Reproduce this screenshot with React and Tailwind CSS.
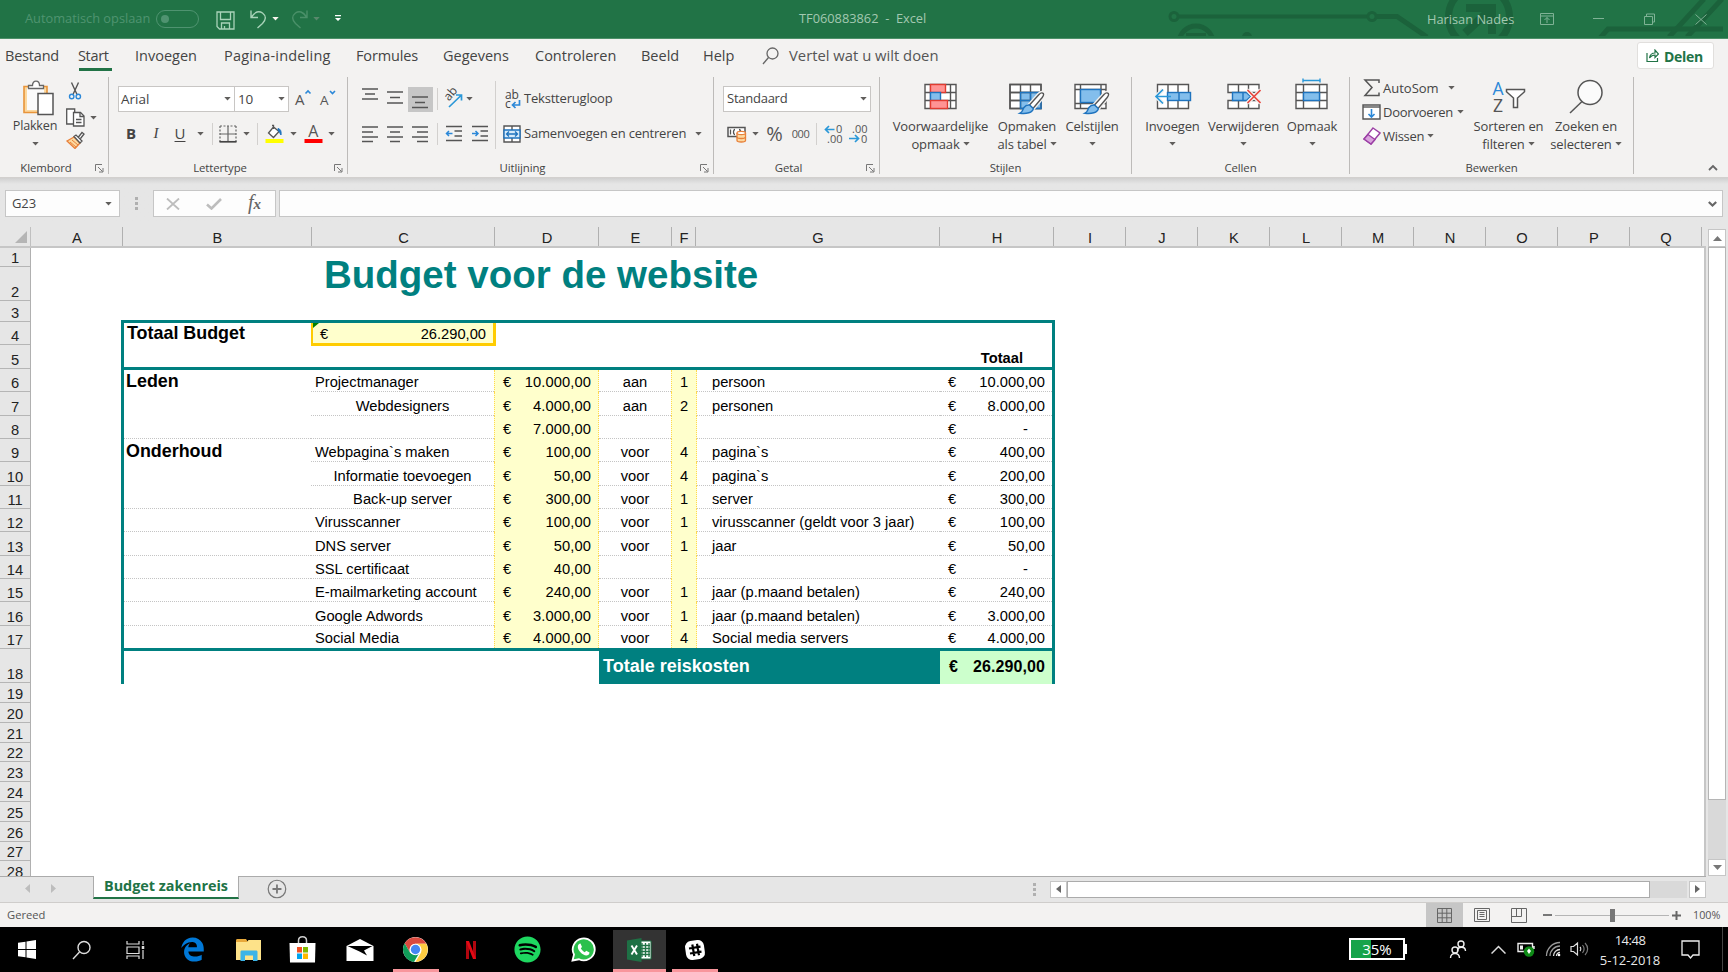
import { FaEdgeLegacy, FaSpotify } from 'react-icons/fa6';

/* ---------- shared pieces ---------- */

function Caret({ className = '' }) {
  return (
    <svg className={`h-[4px] w-[7px] shrink-0 ${className}`} viewBox="0 0 7 4" fill="#605e5c">
      <path d="M0.3 0h6.4L3.5 3.6z" />
    </svg>
  );
}

function Launcher() {
  return (
    <svg className="h-[9px] w-[9px]" viewBox="0 0 9 9" fill="none" stroke="#777">
      <path d="M0.5 7V0.5H7M3 3l4.5 4.5M8 4v4H4" />
    </svg>
  );
}

function Group({ width, label, launcher, children }) {
  return (
    <div className={`${width} flex h-[97px] shrink-0 flex-col border-r border-[#bdbbb9]`}>
      <div className="h-[86px]">{children}</div>
      <div className="flex h-[13px] items-center text-[11.4px] leading-[13px] tracking-[-0.1px]">
        <span className={launcher ? 'w-[0px]' : 'w-[13px]'} />
        <span className="flex-1 pl-[-1px] text-center">{label}</span>
        <span className={launcher ? 'w-[16px] pt-[1px] pl-[3px]' : 'w-[13px]'}>{launcher && <Launcher />}</span>
      </div>
    </div>
  );
}

function Cell({ w, className = '', children }) {
  return <div className={`flex h-full shrink-0 items-center justify-center ${w} ${className}`}>{children}</div>;
}

function Divider({ className = '' }) {
  return <div className={`w-px shrink-0 bg-[#d2d0ce] ${className}`} />;
}

function Lines({ rows }) {
  return (
    <svg className="h-[18px] w-[17px]" viewBox="0 0 17 18" stroke="#555" strokeWidth="1.5">
      {rows.map(([x1, x2, y]) => (
        <path key={y} d={`M${x1} ${y}H${x2}`} />
      ))}
    </svg>
  );
}

function BigButton({ w, icon, lines, caretBelow }) {
  return (
    <div className={`${w} flex shrink-0 flex-col items-center text-[13px] leading-[18px] tracking-[-0.15px]`}>
      <div className="flex h-[39px] items-start">{icon}</div>
      <span className="whitespace-nowrap">{lines[0]}</span>
      {caretBelow ? (
        <Caret className="mt-[7px]" />
      ) : (
        <span className="flex items-center gap-[3px] whitespace-nowrap">
          {lines[1]}
          <Caret />
        </span>
      )}
    </div>
  );
}

/* ---------- ribbon icons ---------- */

const GRID = 'M1 6.5h31v24H1zM1 14.5h31M1 22.5h31';

function ConditionalIcon() {
  return (
    <svg className="h-[39px] w-[34px]" viewBox="0 0 34 39" fill="none" strokeWidth="1.4">
      <path d={GRID + 'M6.5 6.5v24M26.5 6.5v24'} fill="#fff" stroke="#555" />
      <rect x="6.5" y="6.5" width="15" height="8" fill="#ff9494" stroke="#e03c31" />
      <rect x="6.5" y="14.5" width="10" height="8" fill="#83beec" stroke="#1e73be" />
      <rect x="6.5" y="22.5" width="17" height="8" fill="#ff9494" stroke="#e03c31" />
    </svg>
  );
}

function Brush() {
  return (
    <g transform="translate(0 -1)">
      <path d="M33.5 16c1.500.5 1.500 2-.3 4.500L24 31.500l-3.500-3.500L30 17.500c1.500-1.500 2.500-2 3.500-1.500z" fill="none" stroke="#f3f2f1" strokeWidth="4" />
      <path d="M33.500 16c1.500.5 1.500 2-.3 4.500L24 31.500l-3.500-3.500L30 17.500c1.500-1.500 2.500-2 3.500-1.500z" fill="#fff" stroke="#555" />
      <path d="M20.500 28l3.800 3.600c-.5 4-7 5.600-13.300 4.600 3-1.200 2.200-3.200 4-5.700 1.400-2 3.500-2.800 5.500-2.500z" fill="#83beec" stroke="#1e73be" />
    </g>
  );
}

function TableIcon() {
  return (
    <svg className="h-[39px] w-[36px]" viewBox="0 0 36 39" fill="none" strokeWidth="1.4">
      <path d={GRID} fill="#fff" stroke="#555" />
      <path d="M11.500 14.500H32v16H11.500z" fill="#83beec" />
      <path d={GRID + 'M11.500 6.500v24M21.500 6.500v24'} stroke="#555" />
      <path d="M11.500 30.500v-16H32v16zM11.500 22.500H32M21.500 14.500v16" stroke="#1e73be" />
      <Brush />
    </svg>
  );
}

function StylesIcon() {
  return (
    <svg className="h-[39px] w-[36px]" viewBox="0 0 36 39" fill="none" strokeWidth="1.4">
      <path d="M1 6.500h31v24H1zM1 11.500h31M1 25.500h31M6.500 6.500v24M27 6.500v24" fill="#fff" stroke="#555" />
      <rect x="6.500" y="11.500" width="20" height="13" fill="#83beec" stroke="#1e73be" />
      <Brush />
    </svg>
  );
}

function InsertIcon() {
  return (
    <svg className="h-[39px] w-[38px]" viewBox="0 1 38 39" fill="none" strokeWidth="1.4">
      <path d="M3.500 7.500h31v24h-31zM14 7.500v24M24 7.500v24" fill="#fff" stroke="#555" />
      <rect x="13.500" y="15.500" width="23" height="8" fill="#83beec" stroke="#1e73be" />
      <path d="M25 15.500v8" stroke="#1e73be" />
      <path d="M9 12.500l-7 7 7 7" stroke="#f3f2f1" strokeWidth="4" />
      <path d="M17 19.500H2M9 12.500l-7 7 7 7" stroke="#2b98d8" strokeWidth="1.700" />
    </svg>
  );
}

function DeleteIcon() {
  return (
    <svg className="h-[39px] w-[34px]" viewBox="0 1 34 39" fill="none" strokeWidth="1.400">
      <path d="M1 15.500v-8h31v8zM11.500 7.500v8M21.500 7.500v8M1 23.500v8h31v-8zM11.500 23.500v8M21.500 23.500v8" fill="#fff" stroke="#555" />
      <path d="M5.500 15.500h14l4 4-4 4h-14zM16 15.500v8" fill="#83beec" stroke="#1e73be" />
      <path d="M20.500 13l13 13M33.500 13l-13 13" stroke="#f3f2f1" strokeWidth="4" />
      <path d="M20.500 13l13 13M33.500 13l-13 13" stroke="#e8483f" strokeWidth="1.600" />
    </svg>
  );
}

function FormatIcon() {
  return (
    <svg className="h-[39px] w-[34px]" viewBox="0 0 34 39" fill="none" strokeWidth="1.400">
      <path d={GRID + 'M8.500 6.500v24M24.500 6.500v24'} fill="#fff" stroke="#555" />
      <rect x="8.500" y="14.500" width="16" height="8" fill="#83beec" stroke="#1e73be" />
      <path d="M8 2.500h17M8 .5v4M25 .5v4" stroke="#2b98d8" />
    </svg>
  );
}

function PasteIcon() {
  return (
    <svg className="h-[37px] w-[32px]" viewBox="0 0 32 37" fill="none" strokeWidth="1.300">
      <path d="M2 6.500h23v26H2z" fill="#fcd9a0" stroke="#e8943a" strokeWidth="1.600" />
      <path d="M5 8h17v22H5z" fill="#fbfbfb" />
      <path d="M6.500 8.500v-3h4C10.500 2.500 12 1.200 14 1.200s3.500 1.300 3.500 4.300h4v3z" fill="#fff" stroke="#666" />
      <path d="M16 13.500h15v21H16z" fill="#fff" stroke="#555" strokeWidth="1.500" />
    </svg>
  );
}

function CutIcon() {
  return (
    <svg className="h-[18px] w-[14px]" viewBox="0 0 14 18" fill="none">
      <path d="M3.500 .5l5.500 12M10.500 .5L5 12.500" stroke="#555" strokeWidth="1.400" />
      <circle cx="3.700" cy="14.500" r="2.200" stroke="#2b88d8" strokeWidth="1.400" />
      <circle cx="10.300" cy="14.500" r="2.200" stroke="#2b88d8" strokeWidth="1.400" />
    </svg>
  );
}

function CopyIcon() {
  return (
    <svg className="h-[19px] w-[19px]" viewBox="0 0 19 19" fill="#fff" stroke="#555" strokeWidth="1.300">
      <path d="M.700 1h8v15h-8z" />
      <path d="M7.500 4.500h7l3.500 3.500v10H7.500z" />
      <path d="M14 4.500V8.500h4M10 11.500h5.500M10 14.500h5.500" fill="none" />
    </svg>
  );
}

function PainterIcon() {
  return (
    <svg className="h-[18px] w-[19px]" viewBox="0 0 19 18" fill="none">
      <path d="M1 10l7-4 6 6-5 5.500z" fill="#fcd9a0" stroke="#e8803a" strokeWidth="1.300" />
      <path d="M4 11l6 5M6 9l6 5" stroke="#e8803a" />
      <path d="M8 5.500l2-1.500 6 6-2 2zM12.500 6l3.500-4.500 2 1.500-3.500 4.500" fill="#fff" stroke="#555" strokeWidth="1.300" />
    </svg>
  );
}

function BordersIcon() {
  return (
    <svg className="h-[18px] w-[18px]" viewBox="0 0 18 18" fill="none" stroke="#666" strokeWidth="1.200">
      <path d="M1 1h16M1 1v16M17 1v16" strokeDasharray="2 1.500" />
      <path d="M9 1v16M1 9h16" />
      <path d="M.5 16.800h17" stroke="#444" strokeWidth="1.700" />
    </svg>
  );
}

function FillIcon() {
  return (
    <svg className="h-[20px] w-[19px]" viewBox="0 0 19 20" fill="none">
      <path d="M8.500 3L3.500 9l5 4.500 5.500-6zM8.500 5V1.500h-1.500" fill="#fff" stroke="#555" strokeWidth="1.300" />
      <path d="M13 4.500c2.500.5 3.500 2.500 3 6.500-1.500-2-1-3-3-4.500z" fill="#1e73be" stroke="#1e73be" />
      <path d="M.5 15h18v4H.5z" fill="#ff0" />
    </svg>
  );
}

function OrientationIcon() {
  return (
    <svg className="h-[20px] w-[20px] overflow-visible" viewBox="0 0 20 20" fill="none">
      <text x="0" y="0" transform="translate(6 13.500) rotate(-50)" fontSize="12" fill="#444">ab</text>
      <path d="M6 19L18 7.500M13 7h5.500V12.500" stroke="#2b98d8" strokeWidth="1.700" />
    </svg>
  );
}

function WrapIcon() {
  return (
    <svg className="h-[20px] w-[17px] overflow-visible" viewBox="0 0 17 20" fill="none">
      <text x="0" y="9.500" fontSize="12" fill="#444">ab</text>
      <text x="0" y="18.500" fontSize="12" fill="#444">c</text>
      <path d="M14.500 11v5H8M10.500 13l-3 3 3 3" stroke="#2b88d8" strokeWidth="1.700" />
    </svg>
  );
}

function MergeIcon() {
  return (
    <svg className="h-[18px] w-[18px]" viewBox="0 0 18 18" fill="none">
      <path d="M1 1h16v16H1zM9 1v4M9 13v4" fill="#fff" stroke="#555" strokeWidth="1.400" />
      <path d="M1 5h16v8H1z" fill="#d6ebfa" stroke="#1e73be" strokeWidth="1.400" />
      <path d="M3.500 9h11M6 6.500L3.500 9 6 11.500M12 6.500L14.500 9 12 11.500" stroke="#1e73be" strokeWidth="1.300" />
    </svg>
  );
}

function IndentIcon({ right }) {
  return (
    <svg className="h-[18px] w-[18px]" viewBox="0 0 18 18" fill="none" strokeWidth="1.500">
      <path d="M1 1.500h16M9.500 6h7.500M9.500 11h7.500M1 15.500h16" stroke="#555" />
      <path d={right ? 'M1 8.500h6M4.500 6L7 8.500 4.500 11' : 'M7.500 8.500h-6M4 6L1.500 8.500 4 11'} stroke="#2b88d8" />
    </svg>
  );
}

function MoneyIcon() {
  return (
    <svg className="h-[17px] w-[20px]" viewBox="0 0 20 17" fill="none">
      <path d="M1 1.500h17v9H1z" fill="#fff" stroke="#555" strokeWidth="1.500" />
      <path d="M3.500 3.500v5M8 3.500c-2 0-2 5 0 5M12 3.500c2 0 2 5 0 5" stroke="#555" strokeWidth="1.300" />
      <path d="M10 7v7.500c0 2 8.500 2 8.500 0V7" fill="#fcd9a0" stroke="#e8803a" strokeWidth="1.300" />
      <ellipse cx="14.250" cy="7" rx="4.250" ry="1.600" fill="#fff" stroke="#e8803a" strokeWidth="1.300" />
      <path d="M10 11c0 2 8.500 2 8.500 0" stroke="#e8803a" strokeWidth="1.300" />
    </svg>
  );
}

function DecimalIcon({ more }) {
  return (
    <svg className="h-[20px] w-[19px] overflow-visible" viewBox="0 0 19 20" fill="none">
      {more ? (
        <>
          <text x="12" y="9" fontSize="11" fill="#555">0</text>
          <text x="3" y="18.500" fontSize="11" fill="#555">.00</text>
          <path d="M10.500 5.500H1.500M5 2L1.500 5.500 5 9" stroke="#2b98d8" strokeWidth="1.700" />
        </>
      ) : (
        <>
          <text x="3" y="9" fontSize="11" fill="#555">.00</text>
          <text x="12" y="18.500" fontSize="11" fill="#555">0</text>
          <path d="M0 14.500h9M6 11l3.500 3.500L6 18" stroke="#2b98d8" strokeWidth="1.700" />
        </>
      )}
    </svg>
  );
}

function SortIcon() {
  return (
    <svg className="h-[34px] w-[34px] overflow-visible" viewBox="0 0 34 34" fill="none">
      <text x="0.500" y="15" fontSize="17.500" fill="#2b88d8">A</text>
      <text x="1" y="31.500" fontSize="17.500" fill="#555">Z</text>
      <path d="M14.500 9.500h18v2.200l-7 6.300v9.500h-4V18l-7-6.300z" fill="#fff" stroke="#555" strokeWidth="1.500" />
    </svg>
  );
}

/* ---------- window title ---------- */

function TitleBar() {
  return (
    <div className="relative flex h-[39px] shrink-0 items-center border-b border-[#4d9069] bg-[#217346] text-[12.800px] text-[#a3c8b1]">
      <svg className="absolute top-0 right-0 h-[36px] w-[576px]" viewBox="0 0 576 36" fill="none" stroke="#1b623b" strokeWidth="4">
        <circle cx="22" cy="16.500" r="4" strokeWidth="3" />
        <path d="M27 16.500h188" />
        <circle cx="220" cy="16.500" r="4" strokeWidth="3" />
        <path d="M225 16.500h20L275 37" strokeWidth="5" />
        <circle cx="44" cy="43" r="17" strokeWidth="5" />
        <path d="M34 35h20" />
        <circle cx="95" cy="37" r="5" fill="#1b623b" stroke="none" />
        <circle cx="327" cy="17" r="30.500" strokeWidth="7" />
        <path d="M314 8h26v26M337 11L313 33" strokeWidth="8" />
        <path d="M448 38l8-9h115" strokeWidth="5" />
        <path d="M517 37l35-38M535 37l35-38" strokeWidth="5" />
      </svg>
      <div className="relative flex w-[799px] items-center text-[#4f9370]">
        <span className="ml-[25px] w-[131px] whitespace-nowrap">Automatisch opslaan</span>
        <span className="flex h-[18px] w-[43px] items-center rounded-full border border-[#4f9370] pl-[4px]">
          <span className="h-[8px] w-[8px] rounded-full bg-[#4f9370]" />
        </span>
        <svg className="mt-[2px] ml-[17px] h-[19px] w-[19px]" viewBox="0 0 19 19" fill="none" stroke="#a9d3b9" strokeWidth="1.300">
          <path d="M1 1h17v17H3.500L1 15.500zM4.500 1v7.500h10V1M5.500 18v-6h8v6M8.500 18v-3" />
        </svg>
        <svg className="ml-[15px] h-[20px] w-[17px]" viewBox="0 0 17 20" fill="none" stroke="#a9d3b9" strokeWidth="1.400">
          <path d="M1 1.500v7h7M1.500 8C5 2.500 9 1.500 12.500 4c4 3 3.500 7 0 10.500L7.500 19" />
        </svg>
        <Caret className="ml-[5px] brightness-[2.600]" />
        <svg className="ml-[12px] h-[20px] w-[17px] opacity-30" viewBox="0 0 17 20" fill="none" stroke="#a9d3b9" strokeWidth="1.400">
          <path d="M16 1.500v7H9M15.500 8C12 2.500 8 1.500 4.500 4c-4 3-3.500 7 0 10.500L9.500 19" />
        </svg>
        <Caret className="ml-[5px] opacity-40 brightness-[1.800]" />
        <svg className="mb-[2px] ml-[14px] h-[6px] w-[8px]" viewBox="0 0 8 6" fill="#fff">
          <path d="M1 0h6v1.200H1zM1 3h6L4 6z" />
        </svg>
      </div>
      <span className="relative mt-[-1px] w-[628px] whitespace-pre">TF060883862  -  Excel</span>
      <span className="relative mt-[1px] w-[112px]">Harisan Nades</span>
      <div className="relative flex flex-1 items-center text-[#7fb295]">
        <svg className="ml-[1px] h-[12px] w-[14px]" viewBox="0 0 14 12" fill="none" stroke="currentColor">
          <path d="M.5.500h13v11H.5zM.5 3h13M7 10V4.500M4.500 7L7 4.500 9.500 7" />
        </svg>
        <svg className="ml-[39px] h-[12px] w-[11px]" viewBox="0 0 11 12" stroke="currentColor">
          <path d="M0 5.500h11" />
        </svg>
        <svg className="ml-[40px] h-[12px] w-[11px]" viewBox="0 0 11 12" fill="none" stroke="currentColor">
          <path d="M.5 3.500h8v8h-8zM2.500 3.500V1h8v8H8.500" />
        </svg>
        <svg className="ml-[40px] h-[11px] w-[12px]" viewBox="0 0 12 11" stroke="currentColor">
          <path d="M.5.500l11 10M11.500.500l-11 10" />
        </svg>
      </div>
    </div>
  );
}

function Tabs() {
  const tabs = [
    ['Bestand', 'w-[73px] tracking-[-0.2px]'],
    ['Start', 'w-[57px] tracking-[-0.35px]'],
    ['Invoegen', 'w-[89px]'],
    ['Pagina-indeling', 'w-[132px] tracking-[0.2px]'],
    ['Formules', 'w-[87px] tracking-[-0.15px]'],
    ['Gegevens', 'w-[92px]'],
    ['Controleren', 'w-[106px]'],
    ['Beeld', 'w-[62px]'],
    ['Help', 'w-[58px]'],
  ];
  return (
    <div className="flex h-[34px] shrink-0 items-center pl-[5px] text-[14.500px]">
      {tabs.map(([name, cls]) => (
        <div key={name} className={`${cls} flex h-full shrink-0 flex-col whitespace-nowrap`}>
          <span className="h-[29px] leading-[33px]">{name}</span>
          {name === 'Start' && <span className="ml-[1px] h-[3px] w-[33px] bg-[#217346]" />}
        </div>
      ))}
      <svg className="ml-[1px] h-[18px] w-[17px]" viewBox="0 0 17 18" fill="none" stroke="#666" strokeWidth="1.300">
        <circle cx="10.500" cy="6.500" r="5.500" />
        <path d="M6.500 10.500L1 17" />
      </svg>
      <span className="mt-[-1px] ml-[10px] text-[14.800px] text-[#555]">Vertel wat u wilt doen</span>
      <button className="mr-[14px] ml-auto mt-[-1px] flex h-[27px] w-[77px] items-center rounded-[3px] border border-[#e1dfdd] bg-white pl-[8px] font-bold text-[#217346]">
        <svg className="h-[13px] w-[13px]" viewBox="0 0 13 13" fill="none" stroke="#217346" strokeWidth="1.200">
          <path d="M1 4v8.500h10.500V9M3.500 9C4 5.500 6 4 9 4V1l3.500 4L9 8.500V6C6.500 6 5 7 3.500 9z" />
        </svg>
        <span className="mt-[1px] ml-[5px] text-[14px] tracking-[-0.300px]">Delen</span>
      </button>
    </div>
  );
}

/* ---------- ribbon ---------- */

function ClipboardGroup() {
  return (
    <Group width="w-[109px]" label="Klembord" launcher>
      <div className="flex pl-[5px]">
        <div className="flex w-[60px] flex-col items-center pt-[3px] text-[12.600px] leading-[18px] tracking-[-0.200px]">
          <div className="ml-[5px]"><PasteIcon /></div>
          <span>Plakken</span>
          <Caret className="mt-[7px]" />
        </div>
        <div className="flex flex-col pt-[5px]">
          <div className="flex h-[23px] items-start pl-[3px]"><CutIcon /></div>
          <div className="flex h-[25px] items-center gap-[5px] pl-[1px]"><CopyIcon /><Caret /></div>
          <div className="flex h-[20px] items-start pt-[1px] pl-[1px]"><PainterIcon /></div>
        </div>
      </div>
    </Group>
  );
}

function FontGroup() {
  return (
    <Group width="w-[239px]" label="Lettertype" launcher>
      <div className="flex h-[44px] items-center pl-[9px] text-[13.500px]">
        <div className="flex h-[26px] w-[117px] items-center justify-between border border-[#c8c6c4] bg-white pr-[3px] pl-[2px]">Arial<Caret /></div>
        <div className="ml-[-1px] flex h-[26px] w-[55px] items-center justify-between border border-[#c8c6c4] bg-white pr-[3px] pl-[3px] tracking-[-0.300px]">10<Caret /></div>
        <svg className="mb-[3px] ml-[6px] h-[18px] w-[17px] overflow-visible" viewBox="0 0 17 18" fill="none">
          <text x="0" y="15.500" fontSize="15" fill="#555">A</text>
          <path d="M10.500 4.500l2.500-2.500 2.500 2.500" stroke="#2b88d8" strokeWidth="1.600" />
        </svg>
        <svg className="mb-[3px] ml-[8px] h-[18px] w-[17px] overflow-visible" viewBox="0 0 17 18" fill="none">
          <text x="0" y="15.500" fontSize="13.500" fill="#555">A</text>
          <path d="M10 2l2.500 2.500L15 2" stroke="#2b88d8" strokeWidth="1.600" />
        </svg>
      </div>
      <div className="flex h-[26px] items-center pl-[9px] text-[15px]">
        <Cell w="w-[26px]" className="pb-[2px] font-bold">B</Cell>
        <Cell w="w-[24px]" className="pb-[2px] font-['Liberation_Serif'] italic">I</Cell>
        <Cell w="w-[24px]" className="pb-[2px] underline underline-offset-2">U</Cell>
        <Cell w="w-[16px]"><Caret /></Cell>
        <Divider className="ml-[4px] h-[22px]" />
        <Cell w="w-[29px]"><BordersIcon /></Cell>
        <Cell w="w-[9px]"><Caret /></Cell>
        <Divider className="ml-[6px] h-[22px]" />
        <Cell w="w-[33px]"><FillIcon /></Cell>
        <Cell w="w-[4px]"><Caret /></Cell>
        <Cell w="w-[37px]">
          <svg className="h-[20px] w-[19px] overflow-visible" viewBox="0 0 19 20">
            <text x="4.300" y="13" fontSize="16" fill="#555">A</text>
            <path d="M.5 15h18v4H.5z" fill="#f00" />
          </svg>
        </Cell>
        <Caret className="ml-[-4px]" />
      </div>
    </Group>
  );
}

function AlignmentGroup() {
  return (
    <Group width="w-[366px]" label="Uitlijning" launcher>
      <div className="flex pl-[9px]">
        <div className="w-[138px]">
          <div className="flex h-[44px] items-center">
            <Cell w="w-[26px]"><div className="mb-[6px]"><Lines rows={[[0, 16, 2], [3, 13, 7], [0, 16, 12]]} /></div></Cell>
            <Cell w="w-[25px]"><div className="mb-[2px]"><Lines rows={[[0, 16, 3], [3, 13, 8.500], [0, 16, 14]]} /></div></Cell>
            <div className="flex h-[25px] w-[25px] items-center justify-center bg-[#c6c6c6]">
              <div className="mt-[7px]"><Lines rows={[[0, 16, 3], [3, 13, 8.500], [0, 16, 13.500]]} /></div>
            </div>
            <Divider className="ml-[4px] h-[22px]" />
            <Cell w="w-[29px]" className="pb-[2px]"><OrientationIcon /></Cell>
            <Caret className="ml-[-1px]" />
          </div>
          <div className="flex h-[26px] items-center">
            <Cell w="w-[26px]"><Lines rows={[[0, 16, 2], [0, 11, 7], [0, 16, 12], [0, 11, 16.500]]} /></Cell>
            <Cell w="w-[25px]"><Lines rows={[[0, 16, 2], [3, 13, 7], [0, 16, 12], [3, 13, 16.500]]} /></Cell>
            <Cell w="w-[25px]"><Lines rows={[[0, 16, 2], [5, 16, 7], [0, 16, 12], [5, 16, 16.500]]} /></Cell>
            <Divider className="ml-[4px] h-[22px]" />
            <Cell w="w-[31px]"><IndentIcon /></Cell>
            <Cell w="w-[21px]"><IndentIcon right /></Cell>
          </div>
        </div>
        <Divider className="mt-[4px] h-[68px]" />
        <div className="text-[13px] tracking-[-0.200px]">
          <div className="flex h-[44px] items-center gap-[2px] pl-[9px]"><WrapIcon /><span>Tekstterugloop</span></div>
          <div className="flex h-[26px] items-center pl-[7px]">
            <MergeIcon />
            <span className="ml-[3px] whitespace-nowrap">Samenvoegen en centreren</span>
            <Caret className="ml-[9px]" />
          </div>
        </div>
      </div>
    </Group>
  );
}

function NumberGroup() {
  return (
    <Group width="w-[166px]" label="Getal" launcher>
      <div className="flex h-[44px] items-center pl-[9px]">
        <div className="flex h-[26px] w-[148px] items-center justify-between border border-[#c8c6c4] bg-white pr-[3px] pl-[3px] text-[13px] tracking-[-0.250px]">Standaard<Caret /></div>
      </div>
      <div className="flex h-[26px] items-center pl-[13px]">
        <MoneyIcon />
        <Cell w="w-[17px]"><Caret /></Cell>
        <Cell w="w-[21px]" className="text-[20px] text-[#555]">%</Cell>
        <Cell w="w-[31px]" className="text-[11px] tracking-[-0.500px] text-[#555]">000</Cell>
        <Divider className="h-[22px]" />
        <Cell w="w-[32px]"><DecimalIcon more /></Cell>
        <Cell w="w-[18px]"><DecimalIcon /></Cell>
      </div>
    </Group>
  );
}

function EditGroup() {
  return (
    <Group width="w-[284px]" label="Bewerken">
      <div className="flex">
        <div className="mt-[-1px] w-[117px] pl-[12px] text-[13px] leading-[24px]">
          <div className="flex h-[24px] items-center">
            <svg className="h-[18px] w-[19px]" viewBox="0 0 19 18" fill="none" stroke="#555" strokeWidth="1.500">
              <path d="M17 4V1H3l7 7.500L3 16.500h14v-3" />
            </svg>
            <span className="ml-[2px]">AutoSom</span>
            <Caret className="ml-[9px]" />
          </div>
          <div className="flex h-[24px] items-center">
            <svg className="h-[16px] w-[19px]" viewBox="0 0 19 16" fill="none">
              <path d="M1 1h17v14H1z" fill="#fff" stroke="#555" strokeWidth="1.400" />
              <path d="M1 3h17" stroke="#555" strokeWidth="1.400" />
              <path d="M9.500 5v8M6.500 10l3 3 3-3" stroke="#2b88d8" strokeWidth="1.600" />
            </svg>
            <span className="ml-[2px] tracking-[-0.250px]">Doorvoeren</span>
            <Caret className="ml-[4px]" />
          </div>
          <div className="flex h-[24px] items-center">
            <svg className="h-[18px] w-[19px]" viewBox="0 0 19 18" fill="none" stroke="#9b3fa5" strokeWidth="1.400">
              <path d="M11 1l7 5-9 11-7-5z" fill="#fff" />
              <path d="M6 7.500l7 5L9 17l-7-5z" fill="#d9a3dd" />
            </svg>
            <span className="ml-[2px] tracking-[-0.300px]">Wissen</span>
            <Caret className="ml-[3px]" />
          </div>
        </div>
        <div className="flex pt-[1px]">
          <BigButton w="w-[83px]" icon={<div className="pt-[2px]"><SortIcon /></div>} lines={['Sorteren en', 'filteren']} />
          <BigButton
            w="w-[72px]"
            icon={
              <svg className="mt-[1px] h-[35px] w-[34px]" viewBox="0 0 34 35" fill="none" stroke="#555" strokeWidth="1.500">
                <circle cx="21" cy="13.500" r="12" fill="#fbfbfb" />
                <path d="M13 22.500L1 34" />
              </svg>
            }
            lines={['Zoeken en', 'selecteren']}
          />
        </div>
      </div>
    </Group>
  );
}

function Ribbon() {
  return (
    <div className="flex h-[105px] shrink-0 border-b border-[#d2d0ce] pt-[4px]">
      <ClipboardGroup />
      <FontGroup />
      <AlignmentGroup />
      <NumberGroup />
      <Group width="w-[252px]" label="Stijlen">
        <div className="flex pt-px pl-[10px]">
          <BigButton w="w-[101px]" icon={<ConditionalIcon />} lines={['Voorwaardelijke', 'opmaak']} />
          <BigButton w="w-[72px]" icon={<TableIcon />} lines={['Opmaken', 'als tabel']} />
          <BigButton w="w-[58px]" icon={<StylesIcon />} lines={['Celstijlen']} caretBelow />
        </div>
      </Group>
      <Group width="w-[218px]" label="Cellen">
        <div className="flex pt-px pl-[6px]">
          <BigButton w="w-[69px]" icon={<InsertIcon />} lines={['Invoegen']} caretBelow />
          <BigButton w="w-[73px]" icon={<DeleteIcon />} lines={['Verwijderen']} caretBelow />
          <BigButton w="w-[64px]" icon={<FormatIcon />} lines={['Opmaak']} caretBelow />
        </div>
      </Group>
      <EditGroup />
      <div className="flex flex-1 items-end justify-end pr-[10px] pb-[6px]">
        <svg className="h-[7px] w-[10px]" viewBox="0 0 10 7" fill="none" stroke="#666" strokeWidth="1.800">
          <path d="M1 6l4-4 4 4" />
        </svg>
      </div>
    </div>
  );
}

function Dots({ className = '' }) {
  return (
    <div className={`flex flex-col gap-[2px] ${className}`}>
      <span className="h-[3px] w-[3px] bg-[#b0b0b0]" />
      <span className="h-[3px] w-[3px] bg-[#b0b0b0]" />
      <span className="h-[3px] w-[3px] bg-[#b0b0b0]" />
    </div>
  );
}

function FormulaBar() {
  return (
    <div className="flex h-[44px] shrink-0 items-start bg-linear-to-b from-[#d0d0d0] to-[#e6e6e6] to-[6px] pt-[12px] pl-[5px]">
      <div className="flex h-[27px] w-[115px] items-center justify-between border border-[#c6c6c6] bg-[#fdfdfd] pt-[1px] pr-[7px] pl-[6px] text-[13px] tracking-[-0.100px]">
        G23
        <Caret />
      </div>
      <Dots className="mt-[7px] ml-[15px]" />
      <div className="ml-[15px] flex h-[27px] w-[123px] items-center border border-[#c6c6c6] bg-[#fdfdfd]">
        <svg className="ml-[12px] h-[12px] w-[14px]" viewBox="0 0 14 12" stroke="#bdbdbd" strokeWidth="1.800">
          <path d="M1 .5l12 11M13 .5L1 11.500" />
        </svg>
        <svg className="ml-[26px] h-[12px] w-[16px]" viewBox="0 0 16 12" fill="none" stroke="#bdbdbd" strokeWidth="2.600">
          <path d="M1 6.500L5.500 10.500 15 1" />
        </svg>
        <span className="ml-[26px] pb-[2px] font-['Liberation_Serif'] text-[20px] leading-[20px] text-[#666] italic">
          f<span className="text-[15px] font-bold">x</span>
        </span>
      </div>
      <div className="ml-[3px] flex h-[27px] w-[1444px] items-center justify-end border border-[#c6c6c6] bg-[#fdfdfd] pr-[5px]">
        <svg className="h-[6px] w-[9px]" viewBox="0 0 9 6" fill="none" stroke="#666" strokeWidth="2.200">
          <path d="M.8 1l3.700 3.500L8.200 1" />
        </svg>
      </div>
    </div>
  );
}

/* ---------- worksheet ---------- */

const columns = [
  ['A', 'w-[92px]'], ['B', 'w-[189px]'], ['C', 'w-[183px]'], ['D', 'w-[104px]'], ['E', 'w-[73px]'], ['F', 'w-[24px]'],
  ['G', 'w-[244px]'], ['H', 'w-[114px]'], ['I', 'w-[72px]'], ['J', 'w-[72px]'], ['K', 'w-[72px]'], ['L', 'w-[72px]'],
  ['M', 'w-[72px]'], ['N', 'w-[72px]'], ['O', 'w-[72px]'], ['P', 'w-[72px]'], ['Q', 'w-[72px]'],
];

const rowHeights = [
  'h-[19px]', 'h-[34px]', 'h-[21px]', 'h-[23px]', 'h-[24px]', 'h-[23px]', 'h-[24px]', 'h-[23px]', 'h-[23px]', 'h-[24px]',
  'h-[23px]', 'h-[23px]', 'h-[24px]', 'h-[23px]', 'h-[23px]', 'h-[24px]', 'h-[23px]', 'h-[34px]', 'h-[20px]', 'h-[20px]',
  'h-[20px]', 'h-[19px]', 'h-[20px]', 'h-[20px]', 'h-[20px]', 'h-[20px]', 'h-[19px]', 'h-[20px]',
];

const items = [
  { h: 'h-[22px]', head: 'Leden', name: 'Projectmanager', price: '10.000,00', per: 'aan', n: '1', unit: 'persoon', total: '10.000,00' },
  { h: 'h-[24px]', name: 'Webdesigners', center: true, price: '4.000,00', per: 'aan', n: '2', unit: 'personen', total: '8.000,00' },
  { h: 'h-[23px]', name: '', price: '7.000,00', per: '', n: '', unit: '', total: '-', full: true },
  { h: 'h-[23px]', head: 'Onderhoud', name: 'Webpagina`s maken', price: '100,00', per: 'voor', n: '4', unit: 'pagina`s', total: '400,00' },
  { h: 'h-[24px]', name: 'Informatie toevoegen', center: true, price: '50,00', per: 'voor', n: '4', unit: 'pagina`s', total: '200,00' },
  { h: 'h-[23px]', name: 'Back-up server', center: true, price: '300,00', per: 'voor', n: '1', unit: 'server', total: '300,00', full: true },
  { h: 'h-[23px]', name: 'Virusscanner', price: '100,00', per: 'voor', n: '1', unit: 'virusscanner (geldt voor 3 jaar)', total: '100,00', full: true },
  { h: 'h-[24px]', name: 'DNS server', price: '50,00', per: 'voor', n: '1', unit: 'jaar', total: '50,00', full: true },
  { h: 'h-[23px]', name: 'SSL certificaat', price: '40,00', per: '', n: '', unit: '', total: '-', full: true },
  { h: 'h-[23px]', name: 'E-mailmarketing account', price: '240,00', per: 'voor', n: '1', unit: 'jaar (p.maand betalen)', total: '240,00', full: true },
  { h: 'h-[24px]', name: 'Google Adwords', price: '3.000,00', per: 'voor', n: '1', unit: 'jaar (p.maand betalen)', total: '3.000,00', full: true },
  { h: 'h-[22px]', name: 'Social Media', price: '4.000,00', per: 'voor', n: '4', unit: 'Social media servers', total: '4.000,00', last: true },
];

function ItemRow({ row }) {
  const line = row.last ? '' : 'border-b border-dotted border-b-[#c4c4c4]';
  const pad = row.last ? 'pb-[1px]' : '';
  const yellow = 'border-x border-dotted border-x-[#ffd94d] bg-[#ffffcc] pb-[1px]';
  return (
    <div className={`flex ${row.h} leading-[17px] whitespace-nowrap`}>
      <div className={`flex w-[187px] items-end pl-[2px] text-[17.900px] font-bold ${row.full ? line : 'pb-[1px]'}`}>
        <span className="mb-[2px] leading-[16px]">{row.head}</span>
      </div>
      <div className={`flex w-[183px] items-end ${pad} ${line} ${row.center ? 'justify-center' : 'pl-[4px]'}`}>{row.name}</div>
      <div className={`flex w-[105px] items-end justify-between pr-[7px] pl-[8px] tracking-[0.100px] ${yellow}`}>
        <span>€</span>
        <span>{row.price}</span>
      </div>
      <div className={`flex w-[72px] items-end justify-center ${pad} ${line}`}>{row.per}</div>
      <div className={`flex w-[26px] items-end justify-center ${yellow}`}>{row.n}</div>
      <div className={`flex w-[243px] items-end ${pad} ${line} pl-[15px]`}>{row.unit}</div>
      <div className={`flex w-[112px] items-end justify-between ${pad} ${line} pl-[8px] ${row.total === '-' ? 'pr-[24px]' : 'pr-[7px]'}`}>
        <span>€</span>
        <span className="tracking-[0.050px]">{row.total}</span>
      </div>
    </div>
  );
}

function BudgetTable() {
  return (
    <div className="ml-[90px] h-[364px] w-[934px] border-x-3 border-t-3 border-[#008080]">
      <div className="flex h-[44px] leading-[17px]">
        <div className="w-[187px] pt-[2px] pl-[3px] text-[17.900px] font-bold">Totaal Budget</div>
        <div className="relative flex h-[23px] w-[185px] items-end justify-between border-r-3 border-b-3 border-l-2 border-[#ffcc00] bg-[#ffffcc] pr-[7px] pl-[7px]">
          <svg className="absolute top-0 left-0 h-[5px] w-[6px]" viewBox="0 0 6 5" fill="#008000">
            <path d="M0 0h6L0 5z" />
          </svg>
          <span>€</span>
          <span>26.290,00</span>
        </div>
        <div className="flex w-[556px] items-end justify-end pr-[29px] font-bold">Totaal</div>
      </div>
      <div className="h-[3px] bg-[#008080]" />
      {items.map((row, i) => (
        <ItemRow key={i} row={row} />
      ))}
      <div className="h-[3px] bg-[#008080]" />
      <div className="flex h-[33px] font-bold">
        <div className="w-[475px]" />
        <div className="w-[341px] bg-[#008080] pl-[4px] text-[18px] leading-[30px] text-white">Totale reiskosten</div>
        <div className="flex w-[112px] justify-between bg-[#ccffcc] pr-[7px] pl-[9px] text-[16px] leading-[32px]">
          <span>€</span>
          <span className="tracking-[0.100px]">26.290,00</span>
        </div>
      </div>
    </div>
  );
}

function Worksheet() {
  return (
    <div className="flex h-[654px] shrink-0 bg-[#e6e6e6] font-['Liberation_Sans',Arial,sans-serif] text-[14.700px] text-black">
      <div className="w-[1706px]">
        <div className="flex h-[26px] border-b-2 border-[#c6c6c6] pt-[5px]">
          <div className="flex w-[31px] items-end justify-end border-r border-[#c0c0c0] pr-[3px] pb-[3px]">
            <svg className="h-[12px] w-[12px]" viewBox="0 0 12 12" fill="#b5b5b5"><path d="M12 0v12H0z" /></svg>
          </div>
          {columns.map(([name, w]) => (
            <div key={name} className={`${w} h-[19px] shrink-0 border-r border-[#b0b0b0] pl-[1px] text-center leading-[22px] text-[#222]`}>{name}</div>
          ))}
        </div>
        <div className="flex h-[628px] overflow-hidden">
          <div className="w-[31px] shrink-0 border-r border-[#b0b0b0] text-[#222]">
            {rowHeights.map((h, i) => (
              <div key={i} className={`${h} flex items-end justify-center border-b border-[#b5b5b5] leading-[16px]`}>
                <span>{i + 1}</span>
              </div>
            ))}
          </div>
          <div className="w-[1675px] border-r-2 border-[#c6c6c6] bg-white">
            <h1 className="h-[72px] pt-[5px] pl-[293px] text-[38.500px] leading-[44px] font-bold text-[#008080]">Budget voor de website</h1>
            <BudgetTable />
          </div>
        </div>
      </div>
      <div className="ml-[2px] w-[18px] pt-[7px]">
        <div className="flex h-[18px] items-center justify-center border border-[#c6c6c6] bg-white">
          <svg className="h-[5px] w-[9px]" viewBox="0 0 9 5" fill="#777"><path d="M4.500 0L9 5H0z" /></svg>
        </div>
        <div className="h-[553px] border border-[#b5b5b5] bg-white" />
        <div className="h-[59px] bg-[#d9d9d9]" />
        <div className="flex h-[17px] items-center justify-center border border-[#c6c6c6] bg-white">
          <svg className="h-[5px] w-[9px]" viewBox="0 0 9 5" fill="#777"><path d="M0 0h9L4.500 5z" /></svg>
        </div>
      </div>
    </div>
  );
}

function SheetTabs() {
  return (
    <div className="flex h-[26px] shrink-0 items-start bg-[#e6e6e6]">
      <div className="flex h-full w-[93px] items-center gap-[21px] border-t border-[#ababab] pb-[2px] pl-[25px]">
        <svg className="h-[9px] w-[5px]" viewBox="0 0 5 9" fill="#bdbdbd"><path d="M5 0v9L0 4.500z" /></svg>
        <svg className="h-[9px] w-[5px]" viewBox="0 0 5 9" fill="#bdbdbd"><path d="M0 0v9l5-4.500z" /></svg>
      </div>
      <div className="h-[23px] w-[146px] border-x border-b-2 border-x-[#ababab] border-b-[#217346] bg-white text-center text-[14.400px] leading-[19px] font-bold text-[#217346]">
        Budget zakenreis
      </div>
      <div className="flex h-full w-[1467px] items-center border-t border-[#ababab] pb-[1px]">
        <svg className="ml-[28px] h-[20px] w-[20px]" viewBox="0 0 20 20" fill="none" stroke="#777" strokeWidth="1.200">
          <circle cx="10" cy="10" r="8.800" />
          <path d="M10 5.500v9M5.500 10h9" strokeWidth="1.800" />
        </svg>
        <Dots className="ml-[746px]" />
        <div className="ml-[14px] flex h-[17px] w-[17px] items-center justify-center border border-[#c6c6c6] bg-white">
          <svg className="h-[8px] w-[5px]" viewBox="0 0 5 8" fill="#666"><path d="M5 0v8L0 4z" /></svg>
        </div>
        <div className="h-[17px] w-[585px] border border-[#ababab] bg-white" />
        <div className="h-[17px] w-[37px] bg-[#d9d9d9]" />
        <div className="ml-[2px] flex h-[17px] w-[17px] items-center justify-center border border-[#c6c6c6] bg-white">
          <svg className="h-[8px] w-[5px]" viewBox="0 0 5 8" fill="#666"><path d="M0 0v8l5-4z" /></svg>
        </div>
      </div>
    </div>
  );
}

function StatusBar() {
  return (
    <div className="flex h-[25px] shrink-0 items-center border-t border-[#cfcdcb] bg-[#f3f2f1] text-[11.200px] text-[#555]">
      <span className="w-[1426px] pl-[7px]">Gereed</span>
      <div className="flex h-full w-[37px] items-center justify-center bg-[#c6c6c6]">
        <svg className="h-[15px] w-[15px]" viewBox="0 0 15 15" fill="none" stroke="#666"><path d="M.5.500h14v14H.5zM5.200.5v14M9.800.5v14M.5 5.200h14M.5 9.800h14" /></svg>
      </div>
      <svg className="mb-[1px] ml-[11px] h-[14px] w-[16px]" viewBox="0 0 16 14" fill="none" stroke="#666"><path d="M.5.500h15v13H.5zM3.500 2.500h9v9h-9zM5.500 4.500h5M5.500 6.500h5M5.500 8.500h5" /></svg>
      <svg className="ml-[21px] h-[15px] w-[16px]" viewBox="0 0 16 15" fill="none" stroke="#666"><path d="M.5.500h15v14H.5zM.5 8.500h10v-8M5.500.5v8" /></svg>
      <span className="mb-[1px] ml-[16px] h-[2px] w-[9px] bg-[#777]" />
      <div className="ml-[3px] flex h-full w-[114px] items-center">
        <span className="h-px w-[55px] bg-[#b5b5b5]" />
        <span className="h-[13px] w-[5px] bg-[#777]" />
        <span className="h-px w-[54px] bg-[#b5b5b5]" />
      </div>
      <svg className="ml-[3px] h-[9px] w-[9px]" viewBox="0 0 9 9" stroke="#666" strokeWidth="2"><path d="M4.500 0v9M0 4.500h9" /></svg>
      <span className="ml-[12px] text-[10.800px]">100%</span>
    </div>
  );
}

/* ---------- taskbar ---------- */

function Task({ w, active, running, children }) {
  return (
    <div className={`${w} flex h-[45px] shrink-0 flex-col items-center`}>
      <div className={`mt-[3px] flex h-[39px] items-center justify-center ${active ? 'w-[53px] bg-[#333]' : 'w-full'}`}>
        {children}
      </div>
      {(running || active) && <div className={`h-[3px] bg-[#f8969c] ${active ? 'w-[53px]' : 'w-[46px]'}`} />}
    </div>
  );
}

function Taskbar() {
  return (
    <div className="flex h-[45px] shrink-0 bg-black text-[12.600px] text-[#e8e8e8]">
      <Task w="w-[54px]">
        <svg className="h-[19px] w-[18px]" viewBox="0 0 18 19" fill="#fff"><path d="M0 2.800L7.500 1.700V9H0zM8.500 1.500L18 0v9H8.500zM0 10h7.500v7.300L0 16.200zM8.500 10H18v9l-9.500-1.500z" /></svg>
      </Task>
      <Task w="w-[54px]">
        <svg className="h-[20px] w-[19px]" viewBox="0 0 19 20" fill="none" stroke="#ddd" strokeWidth="1.400"><circle cx="12" cy="7.500" r="6" /><path d="M7.500 12L1 19" /></svg>
      </Task>
      <Task w="w-[54px]">
        <svg className="h-[18px] w-[19px]" viewBox="0 0 19 18" fill="none" stroke="#ddd" strokeWidth="1.200"><path d="M1 0v3h12V0M1 6h12v6.500H1zM1 18v-3h12v3M17 0v4M17 9v9" /><path d="M17 5v3" strokeWidth="2.500" /></svg>
      </Task>
      <Task w="w-[61px]"><FaEdgeLegacy className="h-[25px] w-[25px] text-[#0078d7]" /></Task>
      <Task w="w-[51px]">
        <svg className="h-[22px] w-[26px]" viewBox="0 0 26 22">
          <path d="M0 1.500C0 .5.500 0 1.500 0H10l2 3h-12z" fill="#e8a93a" />
          <path d="M0 3h11l1.500-2H25v20H0z" fill="#fde289" />
          <path d="M4.500 22V13c0-1 .5-1.500 1.500-1.500h14c1 0 1.500.5 1.500 1.500v9H17v-5.500H9V22z" fill="#3cb4e7" />
        </svg>
      </Task>
      <Task w="w-[58px]">
        <svg className="mr-[1px] h-[27px] w-[27px]" viewBox="0 0 27 27">
          <path d="M9.500 8V4.500c0-5 8-5 8 0V8" fill="none" stroke="#ccc" strokeWidth="1.500" />
          <path d="M.5 7h26l-.5 19.500H1z" fill="#fff" />
          <path d="M8 11h5v5.500H8z" fill="#f25022" /><path d="M14 11h5v5.500h-5z" fill="#7fba00" />
          <path d="M8 17.500h5V23H8z" fill="#00a4ef" /><path d="M14 17.500h5V23h-5z" fill="#ffb900" />
        </svg>
      </Task>
      <Task w="w-[56px]">
        <svg className="h-[22px] w-[28px]" viewBox="0 0 28 22"><path d="M.5 7L14 0l13.500 7v15H.5z" fill="#fff" /><path d="M1.500 7h25l-8.500 4.500 3 5-7.500-4z" fill="#000" /></svg>
      </Task>
      <Task w="w-[55px]" running>
        <svg className="h-[25px] w-[25px]" viewBox="0 0 48 48">
          <circle cx="24" cy="24" r="24" fill="#fff" />
          <path d="M24 13h20.800A24 24 0 0 0 3.200 12l10.300 18A12 12 0 0 1 24 13z" fill="#db4a3f" />
          <path d="M3.200 12A24 24 0 0 0 21 47.800L31.500 30A12 12 0 0 1 13.600 30z" fill="#109d59" />
          <path d="M44.800 13H24a12 12 0 0 1 10.400 17L24 48A24 24 0 0 0 44.800 13z" fill="#ffcd41" />
          <circle cx="24" cy="24" r="11" fill="#fff" />
          <circle cx="24" cy="24" r="9" fill="#4587f3" />
        </svg>
      </Task>
      <Task w="w-[56px]">
        <svg className="h-[18px] w-[10px]" viewBox="0 0 10 18"><path d="M0 0h3v18H0zM7 0h3v18H7z" fill="#b1060f" /><path d="M0 0h3l7 18H7z" fill="#e50914" /></svg>
      </Task>
      <Task w="w-[57px]"><FaSpotify className="h-[27px] w-[27px] text-[#1ed760]" /></Task>
      <Task w="w-[54px]">
        <span className="relative flex h-[25px] w-[25px] items-center justify-center">
          <svg className="absolute h-[25px] w-[25px]" viewBox="0 0 25 25" fill="#2bc04c" stroke="#fff" strokeWidth="1.800"><path d="M1.500 23.500L3 17.500A11 11 0 1 1 8 22.300z" /></svg>
          <svg className="absolute h-[13px] w-[13px]" viewBox="0 0 13 13" fill="#fff"><path d="M3.500.500L5 4 3.800 5.300C4.800 7.300 6 8.300 7.800 9.200L9.200 7.800l3.300 1.700c0 2-1.500 3-3.200 3C5.500 12 1 8 .8 4 .8 2 2 .5 3.500.500z" /></svg>
        </span>
      </Task>
      <Task w="w-[58px]" active>
        <svg className="h-[24px] w-[25px]" viewBox="0 0 25 24">
          <path d="M13 3h11v18H13z" fill="#fff" stroke="#217346" />
          <path d="M15 5v14M18.500 5v14M22 5v14M14 7.500h9M14 10.500h9M14 13.500h9M14 16.500h9" stroke="#217346" strokeWidth="1.300" />
          <path d="M0 2.500L14.500 0v24L0 21.500z" fill="#1e7145" />
          <path d="M4.500 7.500l5.500 9M10 7.500l-5.500 9" stroke="#fff" strokeWidth="1.900" />
        </svg>
      </Task>
      <Task w="w-[54px]" running>
        <svg className="h-[22px] w-[22px]" viewBox="0 0 22 22">
          <rect x="1.500" y="1.500" width="19" height="19" rx="6" fill="#fff" transform="rotate(-8 11 11)" />
          <path d="M8.300 5.500l2 11.500M13 4.800l2 11.500M5 9.500l11.500-1.800M6 14.500l11.500-1.800" stroke="#000" strokeWidth="2.200" />
        </svg>
      </Task>
      <div className="ml-auto flex h-[44px] w-[379px] items-center">
        <div className="flex h-[22px] w-[56px] items-center justify-center border-2 border-white bg-linear-to-r from-[#16a34a] from-[38%] to-black to-[38%] text-[15px] leading-[18px] text-white">35%</div>
        <div className="h-[10px] w-[2px] bg-white" />
        <svg className="ml-[42px] h-[19px] w-[18px]" viewBox="0 0 18 19" fill="none" stroke="#eee" strokeWidth="1.400">
          <circle cx="12" cy="4" r="3" /><path d="M8.500 11c0-5 8-5 8 0" /><circle cx="6" cy="10" r="3" /><path d="M1.500 18c0-6 9-6 9 0" />
        </svg>
        <svg className="ml-[24px] h-[9px] w-[15px]" viewBox="0 0 15 9" fill="none" stroke="#ddd" strokeWidth="1.500"><path d="M.5 8.500l7-7 7 7" /></svg>
        <svg className="ml-[11px] h-[16px] w-[18px]" viewBox="0 0 18 16" fill="none">
          <path d="M1 2.500h14.500v8H1zM17 5v3" stroke="#eee" strokeWidth="1.400" /><path d="M3 4.500h3v4H3z" fill="#eee" />
          <circle cx="12" cy="10.500" r="5.200" fill="#0e8a16" /><path d="M12 7.500l2 2.500-2 3-2-3z" fill="#fff" />
        </svg>
        <svg className="ml-[10px] h-[16px] w-[16px]" viewBox="0 0 16 16" fill="none" stroke="#999" strokeWidth="1.300">
          <path d="M1.500 15A13.500 13.500 0 0 1 15 1.500M5 15A10 10 0 0 1 15 5" /><path d="M8.500 15A6.500 6.500 0 0 1 15 8.500M11.500 15A3.500 3.500 0 0 1 15 11.500" stroke="#ddd" /><circle cx="14" cy="14" r="1.300" fill="#fff" stroke="none" />
        </svg>
        <svg className="ml-[9px] h-[16px] w-[19px]" viewBox="0 0 19 16" fill="none" stroke="#ddd" strokeWidth="1.200">
          <path d="M1 5.500h2.500L7.500 2v12L3.500 10.500H1zM10 6c1 1 1 3 0 4" /><path d="M12.500 4c2 2.500 2 5.500 0 8M15 2c3.500 3.500 3.500 8.500 0 12" stroke="#777" />
        </svg>
        <div className="ml-[8px] w-[66px] pt-[2px] text-center text-[13px] leading-[20px]">
          <div className="tracking-[-0.500px]">14:48</div>
          <div>5-12-2018</div>
        </div>
        <svg className="ml-[18px] h-[19px] w-[19px]" viewBox="0 0 19 19" fill="none" stroke="#eee" strokeWidth="1.300"><path d="M1 1h17v14h-6l-2.500 3L7 15H1z" /></svg>
        <div className="mr-[5px] ml-auto h-full w-px bg-[#444]" />
      </div>
    </div>
  );
}

export default function App() {
  return (
    <div className="flex h-[972px] w-[1728px] flex-col overflow-hidden bg-[#f3f2f1] font-['Open_Sans','Noto_Sans',sans-serif] text-[#444]">
      <TitleBar />
      <Tabs />
      <Ribbon />
      <FormulaBar />
      <Worksheet />
      <SheetTabs />
      <StatusBar />
      <Taskbar />
    </div>
  );
}
